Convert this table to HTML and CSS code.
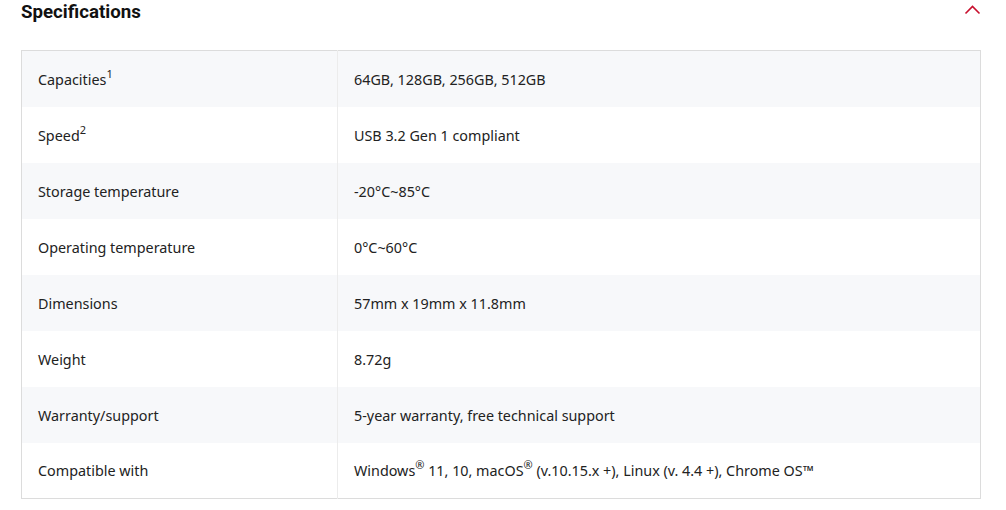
FILE: index.html
```html
<!DOCTYPE html>
<html>
<head>
<meta charset="utf-8">
<link rel="stylesheet" href="styles.css">
</head>
<body>
<section class="specs">
  <div class="specs-head">
    <h2 class="specs-title">Specifications</h2>
    <svg class="chevron" width="18" height="12" viewBox="0 0 18 12"><path d="M1.5 9.5 L8.5 2.5 L15.5 9.5" fill="none" stroke="#c8102e" stroke-width="1.6"/></svg>
  </div>
  <table class="spec-table">
    <tr><td class="k">Capacities<sup>1</sup></td><td class="v">64GB, 128GB, 256GB, 512GB</td></tr>
    <tr><td class="k">Speed<sup>2</sup></td><td class="v">USB 3.2 Gen 1 compliant</td></tr>
    <tr><td class="k">Storage temperature</td><td class="v">-20°C~85°C</td></tr>
    <tr><td class="k">Operating temperature</td><td class="v">0°C~60°C</td></tr>
    <tr><td class="k">Dimensions</td><td class="v">57mm x 19mm x 11.8mm</td></tr>
    <tr><td class="k">Weight</td><td class="v">8.72g</td></tr>
    <tr><td class="k">Warranty/support</td><td class="v">5-year warranty, free technical support</td></tr>
    <tr><td class="k">Compatible with</td><td class="v">Windows<sup>®</sup> 11, 10, macOS<sup>®</sup> (v.10.15.x +), Linux (v. 4.4 +), Chrome OS™</td></tr>
  </table>
</section>
</body>
</html>
```
FILE: styles.css
```css
html, body { margin: 0; padding: 0; background: #fff; }
body { font-family: "Noto Sans", "Open Sans", sans-serif; color: #222; }
.specs { padding: 0 25px 0 21px; }
.specs-head { display: flex; justify-content: space-between; align-items: flex-start; height: 50px; }
.specs-title { margin: 0; padding-top: 1px; font-family: Roboto, "Liberation Sans", sans-serif; font-weight: 700; font-size: 18.7px; line-height: 22px; color: #111; }
.chevron { margin-top: 4px; margin-right: -1px; }
.spec-table { width: 960px; border-collapse: collapse; border: 1px solid #dcdcdc; font-size: 14.35px; }
.spec-table tr:nth-child(odd) { background: #f7f8fa; }
.spec-table td { height: 56px; padding: 2px 16px 0; box-sizing: border-box; vertical-align: middle; line-height: 20px; }
.spec-table td.k { width: 316px; border-right: 1px solid #ececec; }
.spec-table sup { font-size: 11px; line-height: 0; vertical-align: 7px; }
```
